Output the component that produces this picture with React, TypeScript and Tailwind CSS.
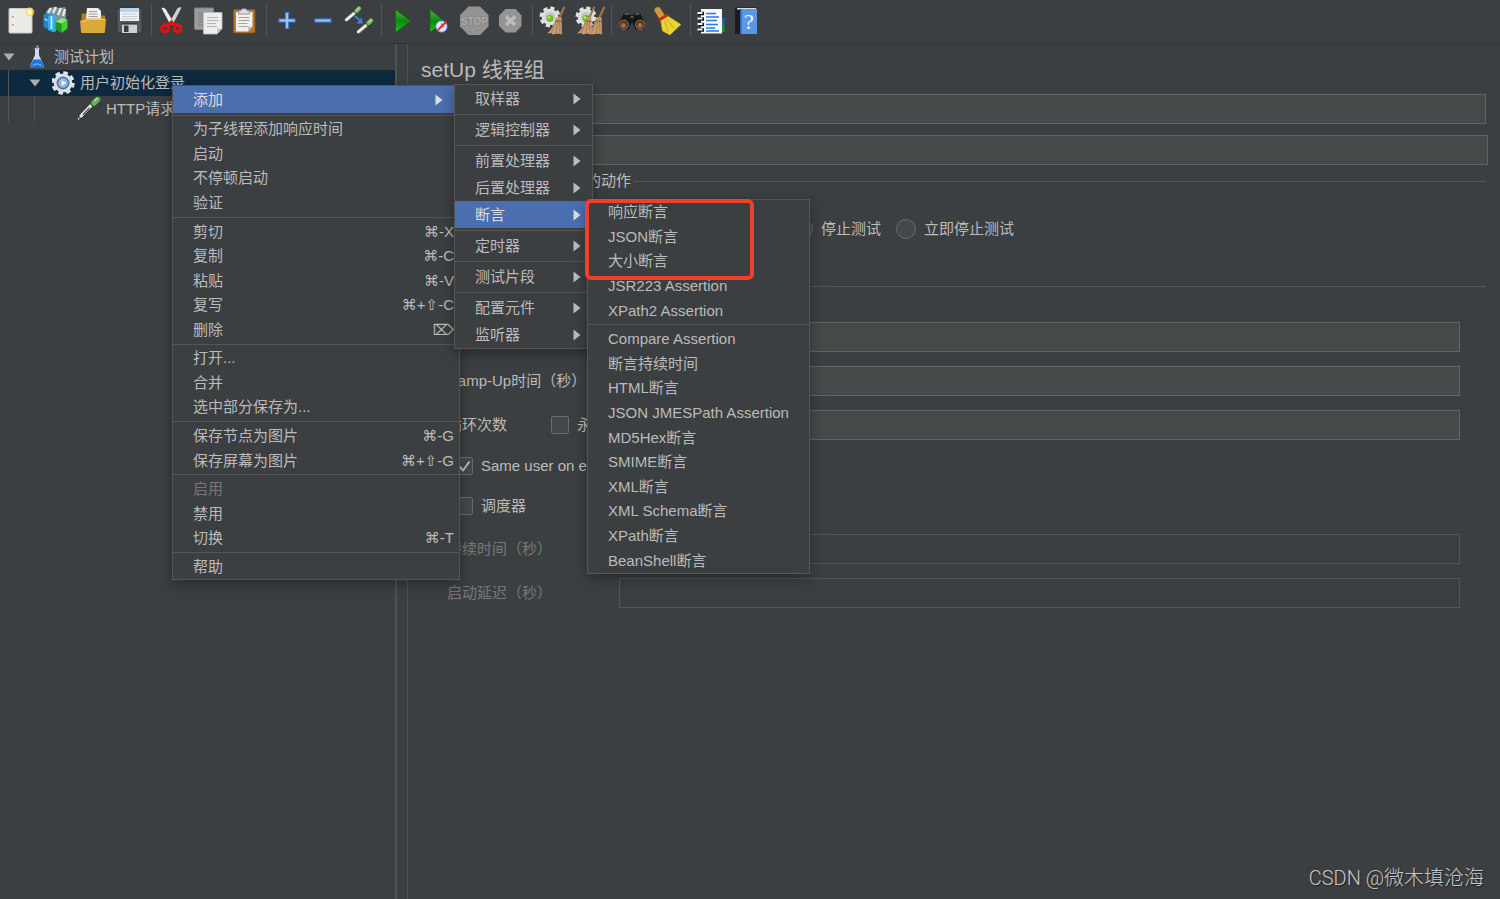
import type { ReactNode } from "react";

type IconProps = { children: ReactNode };

function ToolIcon({ children }: IconProps) {
    return (
        <svg viewBox="0 0 36 40" className="w-9 h-10" fill="none" aria-hidden="true">
            {children}
        </svg>
    );
}

/* toolbar drawings, all on a 36x40 board */

const NewIcon = () => (
    <ToolIcon>
        <rect x="6" y="8.5" width="23" height="24.5" rx="1" fill="#ecebe8" stroke="#c9c8c4" />
        <path d="M9 17h1.5M9 25h1.5" stroke="#8a8a86" strokeWidth="1.6" />
        <circle cx="26.7" cy="12" r="4.6" fill="#f1e25a" opacity="0.75" />
        <circle cx="26.7" cy="12" r="2.2" fill="#fffbd0" />
    </ToolIcon>
);

const TemplatesIcon = () => (
    <ToolIcon>
        <path d="M7 12l3-4 5-1 5 1 6-1 1 3v10l-12 4-8-4z" fill="#7d9199" />
        <path d="M9 13l3-5M14 13l3-6M19 15l3-7M24 16l2-7" stroke="#e6eaec" strokeWidth="2.4" />
        <path d="M4.500 14.500 8 13l4 2v16l-7.500-4z" fill="#1c86c8" />
        <path d="M9 16l3.500-2 4.500 3v14.500l-3 .5-5-2z" fill="#35aee6" />
        <path d="M12.500 16v13" stroke="#d8f0fa" strokeWidth="1.600" />
        <path d="M5.500 19l3 1.500" stroke="#a6dcf5" strokeWidth="1.400" />
        <path d="M16.500 21.500 23 18l5.500 2-6 4z" fill="#8bea74" />
        <path d="M16.500 21.500v8l6 3.500v-9z" fill="#1f9a1b" />
        <path d="M22.500 24l6-4v8.500l-6 4.500z" fill="#3fd12d" />
    </ToolIcon>
);

const OpenIcon = () => (
    <ToolIcon>
        <path d="M6.500 13.500h8l2 2H30V30H6.500z" fill="#b07d25" />
        <path d="M12 8h11l3 3v13H10.500z" fill="#f1f1ef" />
        <path d="M14 11.500h8M13.500 14h9M13.500 16.500h9" stroke="#9c9c9a" strokeWidth="1" />
        <path d="M5 20.500c4 0 6-2 9-2h15.500c1 0 1.500.5 1.400 1.500L30 31.500c-.1 1-.7 1.500-1.500 1.500h-21C6.500 33 6 32.500 6 31.500z" fill="#dba83a" />
        <path d="M6.500 21.500c4 0 6-2 9-2h14" stroke="#f3cd74" strokeWidth="1" />
    </ToolIcon>
);

const SaveIcon = () => (
    <ToolIcon>
        <path d="M7 8h22l2 2v21.500L29.500 33h-21L6 31V9z" fill="#55585a" stroke="#2c2e2f" strokeWidth=".8" />
        <rect x="9" y="8" width="19" height="13" fill="#eef3f8" />
        <path d="M9 8h19v4H9z" fill="#b9d2e8" />
        <path d="M11 14h15M11 16.500h15M11 19h15" stroke="#c3c9ce" strokeWidth="1" />
        <rect x="11" y="24" width="15" height="9" fill="#cfd0d0" />
        <rect x="13" y="25.500" width="4.500" height="6.500" fill="#3b3d3e" />
        <path d="M11 24h15" stroke="#1f2021" strokeWidth="1" />
    </ToolIcon>
);

const CutIcon = () => (
    <ToolIcon>
        <path d="M7.500 8c2.500-.5 4 .5 5 2.500L20 23l-3.500 2z" fill="#ececec" />
        <path d="M27.500 7.500c-2.500-.5-4 .5-5 2.500L15 23l3.500 2z" fill="#cfd1d2" />
        <circle cx="11" cy="28.500" r="3.300" stroke="#dc1414" strokeWidth="3.200" />
        <circle cx="23.500" cy="28.500" r="3.300" stroke="#dc1414" strokeWidth="3.200" />
        <path d="M12.500 25.500l5-3 5 3" stroke="#dc1414" strokeWidth="3.400" strokeLinejoin="round" />
        <circle cx="17.500" cy="20.500" r="1" fill="#6d6f70" />
    </ToolIcon>
);

const CopyIcon = () => (
    <ToolIcon>
        <rect x="4.500" y="8" width="19" height="21.500" rx="1" fill="#9b9d9c" stroke="#7f8180" />
        <path d="M8 13h12M8 16h12M8 19h5M8 22h5M8 25h5" stroke="#7c7e7d" strokeWidth="1.200" />
        <path d="M13.500 12.500H32v16L27 34H13.500z" fill="#ededeb" stroke="#bebebc" strokeWidth=".8" />
        <path d="M17 17.500h11.500M17 20.500h11.500M17 23.500h9M17 26.500h10" stroke="#b4b4b2" strokeWidth="1.200" />
        <path d="M27 34v-5.500h5z" fill="#c5c5c3" />
    </ToolIcon>
);

const PasteIcon = () => (
    <ToolIcon>
        <rect x="7.500" y="9.500" width="21.500" height="23.500" rx="1.500" fill="#b9782a" stroke="#8a5514" />
        <path d="M10 12h16.500v14.500l-4.500 5H10z" fill="#f0f0ee" />
        <path d="M12.500 17.500h11M12.500 20.500h11M12.500 23.500h9M12.500 26.500h9" stroke="#a3a3a1" strokeWidth="1.200" />
        <path d="M22 31.500v-5h4.500z" fill="#c2c2c0" />
        <path d="M12.500 14v-3.500H15c0-2.500 6-2.500 6 0h2.500V14z" fill="#dcdcda" stroke="#80807e" strokeWidth=".8" />
    </ToolIcon>
);

const PlusIcon = () => (
    <ToolIcon>
        <path d="M16.500 12.500h3v6.500H26v3h-6.500v6.500h-3V22H10v-3h6.500z" fill="#a3c9f5" stroke="#3f7fd0" strokeWidth="1.200" />
    </ToolIcon>
);

const MinusIcon = () => (
    <ToolIcon>
        <rect x="10" y="19" width="16" height="3" fill="#a3c9f5" stroke="#3f7fd0" strokeWidth="1.200" />
    </ToolIcon>
);

/* one dropper, tip bottom left and bulb top right */
const Dropper = () => (
    <g strokeLinecap="round">
        <path d="M2 14.500 9.500 8" stroke="#7b7f7e" strokeWidth="3.800" />
        <path d="M1 15 9.500 8" stroke="#f1f1ef" strokeWidth="2.400" />
        <path d="M8.500 5.500l3.500 4" stroke="#2f4a2b" strokeWidth="1.500" />
        <path d="M11.500 6 14 3.500" stroke="#7cb860" strokeWidth="4.200" />
        <path d="M12 5 14 3" stroke="#b3dd9d" strokeWidth="1.200" />
    </g>
);

const ToggleIcon = () => (
    <ToolIcon>
        <g transform="translate(4 5)"><Dropper /></g>
        <g transform="translate(16 17)"><Dropper /></g>
        <path d="M14 16l5 4.500" stroke="#3c82e0" strokeWidth="2" />
        <path d="M22 23.500h-6.500l5-6z" fill="#3c82e0" />
    </ToolIcon>
);

const StartIcon = () => (
    <ToolIcon>
        <defs>
            <linearGradient id="play" x1="0" y1="0" x2="0" y2="1">
                <stop offset="0" stopColor="#4fae4c" />
                <stop offset=".5" stopColor="#0c8a0c" />
                <stop offset="1" stopColor="#21c61e" />
            </linearGradient>
        </defs>
        <path d="M11.500 9.500 27 21 11.500 32.500z" fill="url(#play)" stroke="#0c640c" strokeWidth=".8" />
    </ToolIcon>
);

const StartNoPauseIcon = () => (
    <ToolIcon>
        <path d="M10 9.500 24.500 21 10 32.500z" fill="url(#play)" stroke="#0c640c" strokeWidth=".8" />
        <circle cx="21.500" cy="26.500" r="5.700" fill="#dfeafa" stroke="#4f86cf" strokeWidth="1" />
        <path d="M21.500 26.500V23M21.500 26.500h3" stroke="#6d8fbf" />
        <path d="M17 31l9.500-9.500" stroke="#d9302a" strokeWidth="2" />
    </ToolIcon>
);

const StopIcon = () => (
    <ToolIcon>
        <path d="M12.500 6.500h11.500l8.500 8.500v11.500L24 35H12.500L4 26.500V15z" fill="#939393" />
        <text x="18.500" y="25" textAnchor="middle" fontSize="10" fontWeight="700" fill="#adadad" stroke="#808080" strokeWidth="1.200" paintOrder="stroke">STOP</text>
    </ToolIcon>
);

const ShutdownIcon = () => (
    <ToolIcon>
        <path d="M13.500 9h10l6 6.500v10.500L23.500 32.500h-10L7 26V15.500z" fill="#949494" />
        <path d="M14 16.500l9 8.500M23 16.500 14 25" stroke="#bcbcbc" strokeWidth="3.600" />
    </ToolIcon>
);

const Cog = () => (
    <g>
        <circle r="9" stroke="#e2e3e3" strokeWidth="3" strokeDasharray="4.200 2.870" />
        <circle r="8.300" fill="#dddede" />
        <circle r="5" fill="#c3c6c5" />
        <circle cy="1.500" r="3.400" fill="#6ec21f" />
        <circle cx="-1" cy=".5" r="1.200" fill="#b5ec6c" />
    </g>
);

const Besom = () => (
    <g>
        <path d="M17 0l-5 11" stroke="#a8774a" strokeWidth="2" strokeLinecap="round" />
        <path d="M9 10h5.500L15 27l-5-1-4 1-2-1.500L0 26c5-4 7-9 9-16z" fill="#c69e70" />
        <path d="M9.500 12 4.500 25M11 12 9 25.500M12.500 12 13 26" stroke="#a27a50" strokeWidth=".9" />
        <path d="M8 13.500l6.500.5" stroke="#86603c" strokeWidth="1.200" />
    </g>
);

const ClearIcon = () => (
    <ToolIcon>
        <g transform="translate(15 17)"><Cog /></g>
        <g transform="translate(12 7.500)"><Besom /></g>
    </ToolIcon>
);

const ClearAllIcon = () => (
    <ToolIcon>
        <g transform="translate(15 17)"><Cog /></g>
        <g transform="translate(6 7.500)"><Besom /></g>
        <g transform="translate(16 7.500)"><Besom /></g>
    </ToolIcon>
);

const SearchIcon = () => (
    <ToolIcon>
        <path d="M13.500 15h9v7h-9z" fill="#1d1d1d" />
        <path d="M10 13h6l1.500 10-3 6.500H6L4 25z" fill="#161616" />
        <path d="M20 13h6l6 12-2 4.500h-8.500l-3-6.500z" fill="#161616" />
        <path d="M10.500 14h5M21 14h4.500M16.500 17h3" stroke="#8b8b8b" strokeWidth="1.200" />
        <circle cx="9.800" cy="24.800" r="4.700" fill="#55331f" stroke="#8a8a88" strokeWidth=".8" />
        <circle cx="26.200" cy="24.800" r="4.700" fill="#55331f" stroke="#8a8a88" strokeWidth=".8" />
        <circle cx="9.500" cy="25.500" r="2.400" fill="#b0693a" />
        <circle cx="26" cy="25.500" r="2.400" fill="#b0693a" />
    </ToolIcon>
);

const ResetSearchIcon = () => (
    <ToolIcon>
        <path d="M4.500 11c-.8-3.500 4-5.500 6-2.500l4.500 7-5.500 3.500z" fill="#cf9a45" stroke="#8c5a14" strokeWidth=".7" />
        <path d="M10.500 20 17 15.500l14 9-11 10.500-7.500-4z" fill="#ead438" stroke="#b59c0c" strokeWidth=".8" />
        <path d="M14.500 21l3.500 11M17 19.500l7 9" stroke="#c4ac20" strokeWidth="1" />
        <path d="M10 19.500 16.500 15.500" stroke="#d32618" strokeWidth="3" strokeLinecap="round" />
    </ToolIcon>
);

const FunctionIcon = () => (
    <ToolIcon>
        <path d="M28 18h3.500v7H28z" fill="#1c62c8" />
        <path d="M28 25h3.500v7H28z" fill="#22961c" />
        <rect x="8" y="9" width="21" height="24.500" fill="#f7f8f9" />
        <path d="M13 13.500h10M13 17h13M13 20.500h11M13 24.500h12M13 28h9M13 31h13" stroke="#2a79dd" strokeWidth="1.300" />
        <path d="M6 13.500h5M6 19h5M6 24.500h5M6 30h5" stroke="#111" strokeWidth="3.400" />
        <path d="M4.500 13h5M4.500 18.500h5M4.500 24h5M4.500 29.500h5" stroke="#f1f1f1" strokeWidth="1.800" />
    </ToolIcon>
);

const HelpIcon = () => (
    <ToolIcon>
        <path d="M6 9 8.500 7.500H28L26 9H11v25H6z" fill="#1b1c1e" />
        <path d="M8 8h19v1.500H8z" fill="#d9dcdf" />
        <rect x="11" y="9" width="17" height="25" fill="#5a98e6" />
        <path d="M11 9h1.500v25H11z" fill="#2f64b0" />
        <text x="20" y="29" textAnchor="middle" fontSize="22" fill="#f4f8fd" fontFamily="Liberation Serif, serif">?</text>
    </ToolIcon>
);

const toolGroups = [
    [
        { label: "新建", Icon: NewIcon },
        { label: "模板", Icon: TemplatesIcon },
        { label: "打开", Icon: OpenIcon },
        { label: "保存", Icon: SaveIcon },
    ],
    [
        { label: "剪切", Icon: CutIcon },
        { label: "复制", Icon: CopyIcon },
        { label: "粘贴", Icon: PasteIcon },
    ],
    [
        { label: "展开全部", Icon: PlusIcon },
        { label: "折叠全部", Icon: MinusIcon },
        { label: "切换", Icon: ToggleIcon },
    ],
    [
        { label: "启动", Icon: StartIcon },
        { label: "不停顿启动", Icon: StartNoPauseIcon },
        { label: "停止", Icon: StopIcon },
        { label: "关闭", Icon: ShutdownIcon },
    ],
    [
        { label: "清除", Icon: ClearIcon },
        { label: "清除全部", Icon: ClearAllIcon },
    ],
    [
        { label: "查找", Icon: SearchIcon },
        { label: "重置查找", Icon: ResetSearchIcon },
    ],
    [
        { label: "函数助手", Icon: FunctionIcon },
        { label: "帮助", Icon: HelpIcon },
    ],
];

function Toolbar() {
    return (
        <header className="flex items-center h-11 pl-[3px] pb-[3px] border-b border-[#323232]">
            {toolGroups.map((group, i) => (
                <div key={i} className="flex items-center">
                    {i > 0 && <div className="w-px h-8 ml-1 mr-0.5 bg-[#555555]" />}
                    {group.map(({ label, Icon }) => (
                        <button key={label} type="button" aria-label={label} className="w-9 h-10">
                            <Icon />
                        </button>
                    ))}
                </div>
            ))}
        </header>
    );
}

/* ---------- tree ---------- */

const TreeArrow = () => (
    <svg viewBox="0 0 12 8" className="w-3 h-2" aria-hidden="true">
        <path d="M.5.500h11L6 7.500z" fill="#adadad" />
    </svg>
);

const FlaskIcon = () => (
    <svg viewBox="0 0 24 26" className="w-6 h-[26px]" fill="none" aria-hidden="true">
        <path d="M9 4v7L4.500 21c-.8 1.800.2 3 2 3h9c1.800 0 2.800-1.200 2-3L13 11V4z" fill="#cfdcea" />
        <path d="M7.500 15.500h7l3 5.500c.8 1.800-.2 3-2 3h-9c-1.800 0-2.800-1.200-2-3z" fill="#1f72dc" />
        <path d="M7 21.500c2-2 6-2 8 0" stroke="#69aaf5" strokeWidth="1.500" />
        <path d="M8.500 4.500h5M11.500 1.500v2" stroke="#aeb7be" strokeWidth="1.500" />
    </svg>
);

const GearIcon = () => (
    <svg viewBox="0 0 24 26" className="w-6 h-[26px]" fill="none" aria-hidden="true">
        <circle cx="11" cy="13" r="10" stroke="#e1e2e3" strokeWidth="3.400" strokeDasharray="4.500 3.350" />
        <circle cx="11" cy="13" r="9.400" fill="#dedfe0" />
        <circle cx="11" cy="13" r="5.700" fill="#8fb4e4" stroke="#4a6fa6" strokeWidth="1.400" />
        <path d="M9.500 10l5 3-5 3z" fill="#f2f7fd" />
    </svg>
);

const SamplerIcon = () => (
    <svg viewBox="1 0 24 26" className="w-6 h-[26px]" fill="none" strokeLinecap="round" aria-hidden="true">
        <path d="M1 23.500 3.500 20" stroke="#c9cccc" strokeWidth="1.500" />
        <path d="M4 20 14.500 9" stroke="#1f2122" strokeWidth="5.200" />
        <path d="M4 20 14 9.500" stroke="#d9dcdb" strokeWidth="3.600" />
        <path d="M6.500 18.500 12 12.500" stroke="#55595a" strokeWidth="1.400" />
        <path d="M13 6.500l5 5" stroke="#294d24" strokeWidth="2.200" />
        <path d="M17 7 20.500 3.500" stroke="#6bb04f" strokeWidth="5.400" />
        <path d="M17.500 5 20 2.500" stroke="#a9dc94" strokeWidth="1.500" />
    </svg>
);

const Guide = () => (
    <span className="w-[26px] h-full shrink-0 pl-2">
        <span className="block w-px h-full bg-[#555555]" />
    </span>
);

function Tree() {
    return (
        <nav aria-label="测试计划" className="w-[395px] shrink-0">
            <ul>
                <li className="flex items-center h-[26px]">
                    <span className="w-[26px] pl-[3px]"><TreeArrow /></span>
                    <FlaskIcon />
                    <span className="pl-1">测试计划</span>
                </li>
                <li className="flex items-center h-[26px] bg-[#0d293e]">
                    <Guide />
                    <span className="w-[26px] pl-[3px]"><TreeArrow /></span>
                    <GearIcon />
                    <span className="pl-1">用户初始化登录</span>
                </li>
                <li className="flex items-center h-[26px]">
                    <Guide />
                    <Guide />
                    <span className="w-[26px]" />
                    <SamplerIcon />
                    <span className="pl-1">HTTP请求</span>
                </li>
            </ul>
        </nav>
    );
}

/* ---------- thread group form ---------- */

type FieldProps = { id: string; disabled?: boolean };

const Field = ({ id, disabled }: FieldProps) => (
    <input
        id={id}
        type="text"
        disabled={disabled}
        className="flex-1 min-w-0 h-[30px] px-2 bg-[#45494a] border border-[#646464] outline-none disabled:bg-transparent disabled:border-[#555555]"
    />
);

type CheckProps = { label: string; checked?: boolean };

const Check = ({ label, checked }: CheckProps) => (
    <label className="flex items-center gap-2 h-6 whitespace-nowrap">
        <span className="relative w-[18px] h-[18px]">
            <input type="checkbox" defaultChecked={checked} className="peer block appearance-none w-full h-full bg-[#43494a] border border-[#6b6b6b] rounded-xs" />
            <svg viewBox="0 0 18 18" className="hidden peer-checked:block absolute inset-0" fill="none" aria-hidden="true">
                <path d="M4.500 9.500 8 13.500 14.500 4.500" stroke="#bbbbbb" strokeWidth="2" />
            </svg>
        </span>
        {label}
    </label>
);

const errorActions = ["继续", "启动下一进程循环", "停止线程", "停止测试", "立即停止测试"];

function ThreadGroupForm() {
    return (
        <main className="flex-1 min-w-0 pl-[13px] pr-3 pt-3">
            <h1 className="text-[21px] leading-7">setUp 线程组</h1>

            <div className="flex items-center mt-[10px] mr-0.5">
                <label htmlFor="name" className="w-16">名称：</label>
                <Field id="name" />
            </div>
            <div className="flex items-center mt-[11px]">
                <label htmlFor="comment" className="w-16">注释：</label>
                <Field id="comment" />
            </div>

            <fieldset className="mt-[5px] mr-0.5 border-t border-[#555555]">
                <legend className="ml-3 px-[3px] leading-[22px]">在取样器错误后要执行的动作</legend>
                <div className="flex gap-[15px] pl-[33px] pt-[27px] pb-9 leading-5 whitespace-nowrap">
                    {errorActions.map((action) => (
                        <label key={action} className="flex items-center gap-2">
                            <input
                                type="radio"
                                name="onError"
                                defaultChecked={action === "继续"}
                                className="appearance-none w-5 h-5 bg-[#43494a] border border-[#6b6b6b] rounded-full"
                            />
                            {action}
                        </label>
                    ))}
                </div>
            </fieldset>

            <fieldset className="mr-0.5 border-t border-[#555555]">
                <legend className="ml-3 px-[3px] leading-[22px]">线程属性</legend>
                <div className="flex flex-col gap-[14px] px-[26px] pt-[25px]">
                    <div className="flex items-center">
                        <label htmlFor="threads" className="w-[172px]">线程数：</label>
                        <Field id="threads" />
                    </div>
                    <div className="flex items-center">
                        <label htmlFor="ramp" className="w-[172px]">Ramp-Up时间（秒）</label>
                        <Field id="ramp" />
                    </div>
                    <div className="flex items-center">
                        <label htmlFor="loops" className="w-[104px]">循环次数</label>
                        <Check label="永远" />
                        <span className="w-3" />
                        <Field id="loops" />
                    </div>
                    <div className="flex flex-col gap-4 pl-2 pb-0.5">
                        <Check label="Same user on each iteration" checked />
                        <Check label="调度器" />
                    </div>
                    <div className="flex items-center text-[#777777]">
                        <label htmlFor="duration" className="w-[172px]">持续时间（秒）</label>
                        <Field id="duration" disabled />
                    </div>
                    <div className="flex items-center text-[#777777]">
                        <label htmlFor="delay" className="w-[172px]">启动延迟（秒）</label>
                        <Field id="delay" disabled />
                    </div>
                </div>
            </fieldset>
        </main>
    );
}

/* ---------- popup menus ---------- */

type Item = { label: string; keys?: string; disabled?: boolean; active?: boolean };

const MenuArrow = () => (
    <svg viewBox="0 0 8 12" className="w-2 h-3" aria-hidden="true">
        <path d="M.5.500 7.500 6 .5 11.500z" fill="currentColor" />
    </svg>
);

const Separator = () => (
    <div role="separator" className="flex items-center h-1 shrink-0">
        <div className="w-full h-px bg-[#555555]" />
    </div>
);

const editGroups: Item[][] = [
    [{ label: "为子线程添加响应时间" }, { label: "启动" }, { label: "不停顿启动" }, { label: "验证" }],
    [
        { label: "剪切", keys: "⌘-X" },
        { label: "复制", keys: "⌘-C" },
        { label: "粘贴", keys: "⌘-V" },
        { label: "复写", keys: "⌘+⇧-C" },
        { label: "删除", keys: "⌦" },
    ],
    [{ label: "打开..." }, { label: "合并" }, { label: "选中部分保存为..." }],
    [
        { label: "保存节点为图片", keys: "⌘-G" },
        { label: "保存屏幕为图片", keys: "⌘+⇧-G" },
    ],
    [{ label: "启用", disabled: true }, { label: "禁用" }, { label: "切换", keys: "⌘-T" }],
    [{ label: "帮助" }],
];

const addGroups: Item[][] = [
    [{ label: "取样器" }],
    [{ label: "逻辑控制器" }],
    [{ label: "前置处理器" }, { label: "后置处理器" }, { label: "断言", active: true }],
    [{ label: "定时器" }],
    [{ label: "测试片段" }],
    [{ label: "配置元件" }, { label: "监听器" }],
];

const assertionGroups: Item[][] = [
    [
        { label: "响应断言" },
        { label: "JSON断言" },
        { label: "大小断言" },
        { label: "JSR223 Assertion" },
        { label: "XPath2 Assertion" },
    ],
    [
        { label: "Compare Assertion" },
        { label: "断言持续时间" },
        { label: "HTML断言" },
        { label: "JSON JMESPath Assertion" },
        { label: "MD5Hex断言" },
        { label: "SMIME断言" },
        { label: "XML断言" },
        { label: "XML Schema断言" },
        { label: "XPath断言" },
        { label: "BeanShell断言" },
    ],
];

function MenuRow({ label, keys, disabled }: Item) {
    return (
        <button
            type="button"
            role="menuitem"
            disabled={disabled}
            className="flex flex-1 items-center justify-between pl-5 pr-[5px] leading-6 whitespace-nowrap disabled:text-[#777777]"
        >
            <span>{label}</span>
            {keys && <span className="font-['Liberation_Sans','DejaVu_Sans',sans-serif]">{keys}</span>}
        </button>
    );
}

function SubmenuRow({ label, active }: Item) {
    return (
        <button
            type="button"
            role="menuitem"
            aria-haspopup="menu"
            className={`flex items-center justify-between h-[27px] shrink-0 pl-5 pr-[11px] whitespace-nowrap ${active ? "bg-[#4b6eaf] text-[#dddddd]" : ""}`}
        >
            <span className="pt-0.5">{label}</span>
            <MenuArrow />
        </button>
    );
}

const popup = "absolute flex flex-col bg-[#3c3f41] border border-[#555555] shadow-[0_4px_12px_rgba(0,0,0,0.35)]";

function Menus() {
    return (
        <>
            <div role="menu" className={`${popup} left-[172px] top-[85px] w-[288px] h-[495px]`}>
                <div className="flex flex-col pr-[5px]">
                    <SubmenuRow label="添加" active />
                </div>
                {editGroups.map((group, i) => (
                    <div key={i} className="contents">
                        <Separator />
                        {group.map((item) => <MenuRow key={item.label} {...item} />)}
                    </div>
                ))}
            </div>

            <div role="menu" className={`${popup} left-[454px] top-[84px] w-[139px]`}>
                {addGroups.map((group, i) => (
                    <div key={i} className="contents">
                        {i > 0 && <Separator />}
                        {group.map((item) => <SubmenuRow key={item.label} {...item} />)}
                    </div>
                ))}
            </div>

            <div role="menu" className={`${popup} left-[587px] top-[199px] w-[223px] h-[375px]`}>
                {assertionGroups.map((group, i) => (
                    <div key={i} className="contents">
                        {i > 0 && <Separator />}
                        {group.map((item) => <MenuRow key={item.label} {...item} />)}
                    </div>
                ))}
            </div>

            {/* marker round the common assertions */}
            <div className="absolute left-[585px] top-[199px] w-[169px] h-[81px] border-4 border-[#ed4128] rounded-md pointer-events-none" />
        </>
    );
}

export default function App() {
    return (
        <div className="relative flex flex-col min-h-screen overflow-hidden bg-[#3c3f41] text-[#bbbbbb] text-[15px] font-['Liberation_Sans','Noto_Sans_CJK_SC',sans-serif]">
            <Toolbar />
            <div className="flex flex-1">
                <Tree />
                <div className="w-[13px] shrink-0 border-l-2 border-r border-[#4f5254]" />
                <ThreadGroupForm />
            </div>
            <Menus />
            <p className="absolute right-4 bottom-[6px] text-[20px] leading-[30px] text-[#c8c8c8] font-['Roboto','Noto_Sans_CJK_SC',sans-serif] font-light [text-shadow:1px_1px_1px_rgba(0,0,0,0.5)]">
                CSDN @微木填沧海
            </p>
        </div>
    );
}
